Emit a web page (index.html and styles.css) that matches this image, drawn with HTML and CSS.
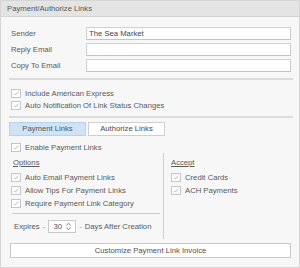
FILE: index.html
```html
<!DOCTYPE html>
<html>
<head>
  <title>Payment/Authorize Links</title>
  <link rel="stylesheet" href="styles.css">
</head>
<body>
  <div class="panel">
    <div class="head">Payment/Authorize Links</div>
    <div class="body">
      <div class="fields">
        <label>Sender</label>
        <div class="field">The Sea Market</div>
        <label>Reply Email</label>
        <div class="field"></div>
        <label>Copy To Email</label>
        <div class="field"></div>
      </div>

      <div class="sep"></div>

      <div class="check"><span class="box"><svg viewBox="0 0 9 9"><path d="M1.8 4.6 L3.6 6.5 L7.3 2.2" /></svg></span>Include American Express</div>
      <div class="check"><span class="box"><svg viewBox="0 0 9 9"><path d="M1.8 4.6 L3.6 6.5 L7.3 2.2" /></svg></span>Auto Notification Of Link Status Changes</div>

      <div class="sep sep2"></div>

      <div class="tabs">
        <div class="tab active">Payment Links</div>
        <div class="tab">Authorize Links</div>
      </div>

      <div class="check enable"><span class="box"><svg viewBox="0 0 9 9"><path d="M1.8 4.6 L3.6 6.5 L7.3 2.2" /></svg></span>Enable Payment Links</div>

      <div class="cols">
        <div class="left">
          <div class="heading">Options</div>
          <div class="check row"><span class="box"><svg viewBox="0 0 9 9"><path d="M1.8 4.6 L3.6 6.5 L7.3 2.2" /></svg></span>Auto Email Payment Links</div>
          <div class="check row"><span class="box"><svg viewBox="0 0 9 9"><path d="M1.8 4.6 L3.6 6.5 L7.3 2.2" /></svg></span>Allow Tips For Payment Links</div>
          <div class="check row"><span class="box"><svg viewBox="0 0 9 9"><path d="M1.8 4.6 L3.6 6.5 L7.3 2.2" /></svg></span>Require Payment Link Category</div>
          <div class="line"></div>
          <div class="expires">
            <span>Expires</span><span class="dash">-</span>
            <span class="spin"><span class="num">30</span><span class="arrows"><svg viewBox="0 0 5 9"><path d="M0.5 3.5 L2.5 1.2 L4.5 3.5 M0.5 5.5 L2.5 7.8 L4.5 5.5" /></svg></span></span>
            <span class="dash">-</span><span>Days After Creation</span>
          </div>
        </div>
        <div class="right">
          <div class="heading">Accept</div>
          <div class="check row"><span class="box"><svg viewBox="0 0 9 9"><path d="M1.8 4.6 L3.6 6.5 L7.3 2.2" /></svg></span>Credit Cards</div>
          <div class="check row"><span class="box"><svg viewBox="0 0 9 9"><path d="M1.8 4.6 L3.6 6.5 L7.3 2.2" /></svg></span>ACH Payments</div>
        </div>
      </div>

      <div class="button">Customize Payment Link Invoice</div>
    </div>
  </div>
</body>
</html>
```

FILE: styles.css
```css
body {margin: 0; font-family: "Liberation Sans", Arial, sans-serif; font-size: 7.7px; color: #585858; background: #fff;}
.panel {width: 298px; height: 266px; border: 1px solid #d6d6d6; background: #f7f7f7;}
.head {height: 15px; line-height: 15px; padding-left: 6px; background: #e4e4e4; border-bottom: 1px solid #d3d3d3; color: #555;}
.body {padding: 10px 8px 0 10px;}

.fields {display: grid; grid-template-columns: 75px 1fr; row-gap: 3px; align-items: center;}
.fields label {color: #5a5a5a;}
.field {box-sizing: border-box; height: 13px; line-height: 11px; padding-left: 2px; background: #fff; border: 1px solid #cfcfcf; border-bottom-color: #c4c4c4; color: #444;}

.sep {height: 2px; background: #dcdcdc; margin: 6px -2px 7px -2px;}
.sep2 {margin: 5px -2px 4px -2px;}

.check {display: flex; align-items: center; height: 12px; color: #5a5a5a;}
.box {box-sizing: border-box; width: 10px; height: 9px; margin-right: 4px; background: #fff; border: 1px solid #c6c6c6; display: flex;}
.box svg {width: 8px; height: 7px;}
.box path {fill: none; stroke: #a4a4a4; stroke-width: 0.9;}

.tabs {display: flex; gap: 2px; margin-left: -2px;}
.tab {box-sizing: border-box; width: 77px; height: 14px; line-height: 12px; text-align: center; background: #fff; border: 1px solid #cfcfcf; color: #4a4a4a;}
.tab.active {background: #cfe3f6; border-color: #b6d3ee; color: #555;}

.enable {margin-top: 5px;}

.cols {display: flex;}
.left {width: 152px; padding-bottom: 6px;}
.right {flex: 1; border-left: 1px solid #cdcdcd; padding-left: 7px;}
.heading {height: 12px; line-height: 12px; margin: 4px 0 2px 2px; text-decoration: underline; color: #5a5a5a;}
.right .heading {margin-left: 0;}
.row {height: 13px;}
.line {height: 1px; background: #cccccc; margin: 3px 3px 6px 1px;}

.expires {display: flex; align-items: center; height: 13px; padding-left: 3px; color: #5a5a5a;}
.dash {margin: 0 3px; color: #999;}
.spin {box-sizing: border-box; display: flex; align-items: center; width: 28px; height: 13px; background: #fff; border: 1px solid #cacaca;}
.num {width: 17px; text-align: center; color: #505050;}
.arrows {display: flex;}
.arrows svg {width: 5px; height: 9px;}
.arrows path {fill: none; stroke: #808080; stroke-width: 0.9;}

.button {box-sizing: border-box; height: 15px; line-height: 13px; margin: 4px 0 0 -1px; text-align: center; background: #fff; border: 1px solid #c9c9c9; color: #505050;}
```
